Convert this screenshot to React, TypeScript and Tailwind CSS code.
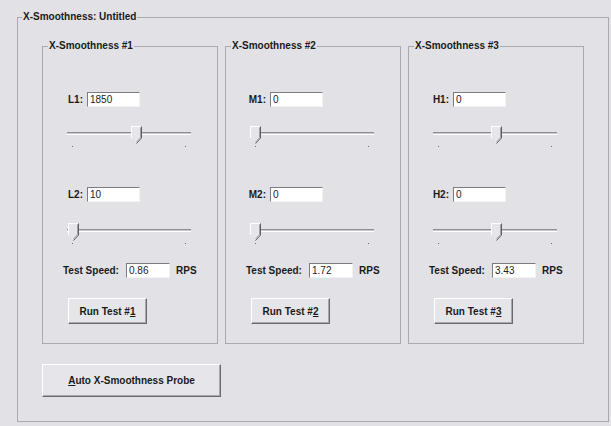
const font = { fontFamily: '"Liberation Sans", Arial, sans-serif' };

interface Group {
  title: string;
  a: { label: string; value: string; pos: number };
  b: { label: string; value: string; pos: number };
  speed: string;
  run: string;
}

const groups: Group[] = [
  { title: "X-Smoothness #1", a: { label: "L1:", value: "1850", pos: 64 }, b: { label: "L2:", value: "10", pos: 1 }, speed: "0.86", run: "1" },
  { title: "X-Smoothness #2", a: { label: "M1:", value: "0", pos: 0 }, b: { label: "M2:", value: "0", pos: 0 }, speed: "1.72", run: "2" },
  { title: "X-Smoothness #3", a: { label: "H1:", value: "0", pos: 58 }, b: { label: "H2:", value: "0", pos: 58 }, speed: "3.43", run: "3" },
];

const TextBox = ({ value, w }: { value: string; w: string }) => (
  <div
    className={`${w} h-[15px] bg-white border border-t-[#7c7c80] border-l-[#7c7c80] border-r-[#f2f2f4] border-b-[#f2f2f4] text-[10px] leading-[13px] pl-[2px] text-[#222]`}
  >
    {value}
  </div>
);

const Slider = ({ pos }: { pos: number }) => (
  <div className="relative w-[124px] h-[22px]">
    <div className="absolute left-0 right-0 top-[6px] h-[3px] border-t border-t-[#8e8e94] border-b border-b-white bg-[#c8c8cc]" />
    <div className="absolute top-[20px] left-[5px] w-[1px] h-[1px] bg-[#707070]" />
    <div className="absolute top-[20px] right-[5px] w-[1px] h-[1px] bg-[#707070]" />
    <svg className="absolute top-0" style={{ left: pos }} width="11" height="18" viewBox="0 0 11 18">
      <path d="M0.5 0.5 H10.5 V12 L5.5 17.5 L0.5 12 Z" fill="#e6e6ea" />
      <path d="M0.5 12 V0.5 H10" fill="none" stroke="#ffffff" />
      <path d="M10.5 0.5 V12 L5.5 17.5" fill="none" stroke="#5e5e62" />
      <path d="M9.5 1.5 V11.6 L5.5 16" fill="none" stroke="#a0a0a6" />
    </svg>
  </div>
);

const Button = ({ children, cls }: { children: React.ReactNode; cls: string }) => (
  <div
    className={`${cls} flex items-center justify-center bg-[#e6e6ea] border border-t-white border-l-white border-r-[#6a6a6e] border-b-[#6a6a6e] shadow-[inset_-1px_-1px_0_#a8a8ae] text-[10px] font-bold text-[#1a1a1a]`}
  >
    {children}
  </div>
);

const ParamRow = ({ label, value }: { label: string; value: string }) => (
  <div className="flex items-center">
    <span className="w-[40px] text-right pr-[4px] text-[10px] font-bold">{label}</span>
    <TextBox value={value} w="w-[53px]" />
  </div>
);

const GroupBox = ({ g }: { g: Group }) => (
  <fieldset className="w-[176px] h-[304px] border border-[#a9a9b0]">
    <legend className="ml-[5px] px-[1px] text-[10px] leading-[12px] font-bold">{g.title}</legend>
    <div className="flex flex-col pl-[4px]">
      <div className="mt-[40px]">
        <ParamRow label={g.a.label} value={g.a.value} />
      </div>
      <div className="mt-[19px] ml-[20px]">
        <Slider pos={g.a.pos} />
      </div>
      <div className="mt-[39px]">
        <ParamRow label={g.b.label} value={g.b.value} />
      </div>
      <div className="mt-[21px] ml-[20px]">
        <Slider pos={g.b.pos} />
      </div>
      <div className="mt-[18px] ml-[16px] flex items-center">
        <span className="w-[63px] text-[10px] font-bold">Test Speed:</span>
        <TextBox value={g.speed} w="w-[44px]" />
        <span className="ml-[6px] text-[10px] font-bold">RPS</span>
      </div>
      <div className="mt-[20px] ml-[21px]">
        <Button cls="w-[79px] h-[26px]">
          <span>
            Run Test #<span className="underline">{g.run}</span>
          </span>
        </Button>
      </div>
    </div>
  </fieldset>
);

export default function App() {
  return (
    <div className="w-[611px] h-[426px] bg-[#e2e2e6] pt-[11px] text-[#1a1a1a]" style={font}>
      <fieldset className="ml-[17px] w-[592px] h-[411px] border border-[#a9a9b0]">
        <legend className="ml-[4px] px-[1px] text-[10px] leading-[12px] font-bold">X-Smoothness: Untitled</legend>
        <div className="pt-[17px] pl-[24px] flex gap-[7px]">
          {groups.map((g) => (
            <GroupBox key={g.title} g={g} />
          ))}
        </div>
        <div className="mt-[20px] ml-[24px]">
          <Button cls="w-[179px] h-[33px]">
            <span>
              <span className="underline">A</span>uto X-Smoothness Probe
            </span>
          </Button>
        </div>
      </fieldset>
    </div>
  );
}
